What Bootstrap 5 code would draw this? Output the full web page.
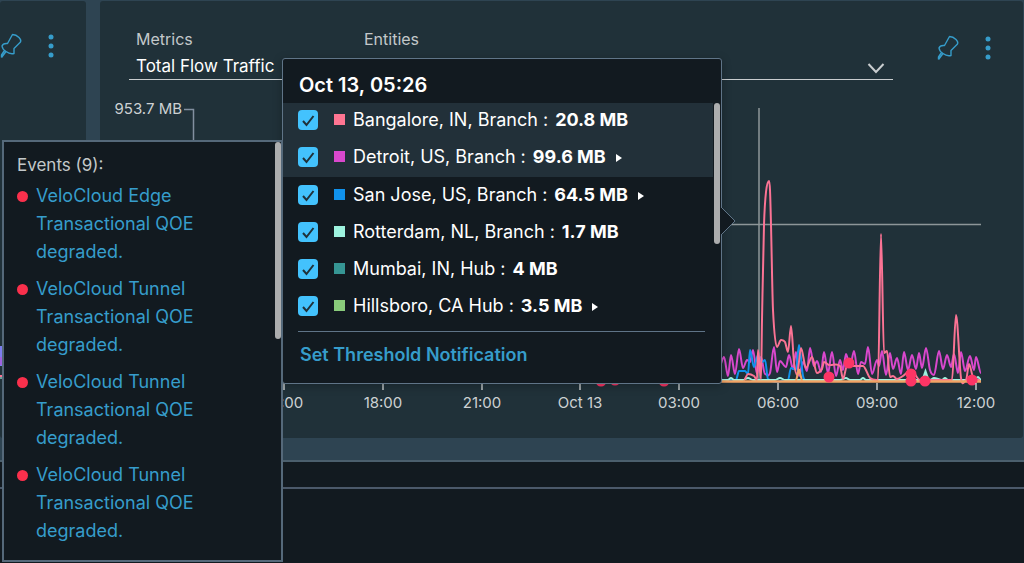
<!DOCTYPE html>
<html lang="en" data-bs-theme="dark">
<head>
<meta charset="utf-8">
<meta name="viewport" content="width=device-width, initial-scale=1">
<title>Flow Traffic</title>
<link href="https://cdn.jsdelivr.net/npm/bootstrap@5.3.0/dist/css/bootstrap.min.css" rel="stylesheet">
<style>
  :root { --ink:#121a20; --panel:#203139; --edge:#55697a; --sky:#369dcb; --soft:#c3c8ca; }
  body { background:#2e4452; color:#fff; font-family:Inter, "Liberation Sans", sans-serif; font-size:16px; overflow:hidden; }
  .dash { padding:1px 1px 22px 0; gap:14px; }
  .panel { background:var(--panel); border-radius:3px; }
  .panel-side { width:86px; }
  .side-tools { padding:32px 32px 0 0; }
  .tool { color:var(--sky); line-height:0; background:none; border:0; padding:0; }
  .tools { gap:25px; }
  .panel-head { padding:26px 32px 0 29px; height:87px; }
  .field label { color:var(--soft); font-size:16px; line-height:24px; padding-left:7px; display:block; }
  .field select { appearance:none; width:100%; height:29px; background:none; border:0; border-bottom:1px solid #c9cdcf; border-radius:0; color:#fff; font-size:17px; padding:3px 7px 0; }
  .field-a { width:218px; }
  .field-b { margin-left:10px; margin-right:43px; }
  .chevron { right:8px; bottom:6px; pointer-events:none; }
  .chart { display:block; width:100%; height:auto; }
  .chart text { fill:#cdd1d3; font-size:15px; }
  .foot { background:var(--ink); border-top:2px solid #4b5f6d; }
  .foot-bar { height:27px; border-bottom:2px solid #4b596a; }

  .floating { background:var(--ink); border:2px solid var(--edge); }
  .events { left:2px; top:140px; width:281px; height:422px; z-index:3; padding:9px 0 0 13px; overflow:hidden; }
  .events h2 { font-size:17px; line-height:28px; font-weight:400; color:var(--soft); margin:0 0 3px; }
  .events li { margin-bottom:9px; gap:8px; }
  .events a { color:var(--sky); font-size:18px; line-height:28px; text-decoration:none; width:190px; }
  .bullet { width:11px; height:11px; margin-top:9px; background:#fa304c; border-radius:50%; flex:none; }
  .thumb { width:6px; background:#acadae; border-radius:3px; }
  .events .thumb { right:0; top:0; height:197px; }

  .readout { left:282px; top:58px; width:440px; border-width:1px; border-color:#5f7487; border-radius:3px; z-index:2; box-shadow:0 2px 10px #0004; }
  .readout h2 { font-size:20px; line-height:26px; font-weight:600; margin:0; padding:13px 16px 5px; }
  .series { height:37px; padding:0 15px 4px; margin-right:8px; font-size:18px; }
  .series.lit { background:#223039; }
  .series.lit + .series:not(.lit) { margin-top:1px; }
  .series .form-check-input { width:20px; height:20px; margin:0 16px 0 0; border:0; border-radius:4px; background-color:#43c2fd; flex:none;
    background-image:url("data:image/svg+xml,%3Csvg xmlns='http://www.w3.org/2000/svg' viewBox='0 0 20 20'%3E%3Cpath d='M5 11l3.5 4L15.500 6' fill='none' stroke='%23203139' stroke-width='2'/%3E%3C/svg%3E"); }
  .swatch { width:11px; height:11px; margin-right:8px; flex:none; }
  .value { font-weight:700; margin-left:7px; }
  .caret { border:4px solid transparent; border-left:6px solid #fff; border-right:0; margin-left:10px; margin-top:3px; }
  .readout .thumb { right:1px; top:44px; height:141px; }
  .readout-foot { margin:5px 16px 0 15px; border-top:1px solid #5f7487; padding:10px 2px 15px; }
  .readout-foot a { color:var(--sky); font-size:18px; font-weight:600; line-height:26px; text-decoration:none; }
  .pointer { left:100%; top:147px; }
</style>
</head>
<body>
<div class="position-relative d-flex flex-column vh-100">
  <main class="dash d-flex align-items-stretch">
    <section class="panel panel-side d-flex flex-column flex-shrink-0">
      <div class="side-tools tools d-flex justify-content-end">
        <button class="tool" type="button" aria-label="Pin"><svg width="24" height="26"><use href="#pin"/></svg></button>
        <button class="tool" type="button" aria-label="More"><svg width="6" height="26"><use href="#dots"/></svg></button>
      </div>
      <svg class="mt-auto mb-5" width="20" height="44" aria-hidden="true"><path d="M1 0V20" stroke="#7c7df0" stroke-width="3"/><path d="M1 11V19" stroke="#c248cf"/><path d="M0 30H20" stroke="#fb7394" stroke-width="2"/><path d="M0 32H20" stroke="#6ca29b" stroke-width="2"/></svg>
    </section>

    <section class="panel flex-grow-1">
      <div class="panel-head d-flex align-items-start">
        <div class="field field-a">
          <label for="metric">Metrics</label>
          <select id="metric"><option>Total Flow Traffic</option></select>
        </div>
        <div class="field field-b flex-grow-1 position-relative">
          <label for="entity">Entities</label>
          <select id="entity"><option></option></select>
          <svg class="chevron position-absolute" width="18" height="12"><path d="M1.500 2L9 10L16.500 2" fill="none" stroke="#c9cdcf" stroke-width="2"/></svg>
        </div>
        <div class="tools d-flex pt-1 mt-1">
          <button class="tool" type="button" aria-label="Pin"><svg width="24" height="26"><use href="#pin"/></svg></button>
          <button class="tool" type="button" aria-label="More"><svg width="6" height="26"><use href="#dots"/></svg></button>
        </div>
      </div>

      <svg class="chart" viewBox="100 88 923 350" role="img" aria-label="Total flow traffic over time">
        <text x="182" y="114" text-anchor="end">953.7 MB</text>
        <path d="M184 109.500H193.500V381" fill="none" stroke="#8290a0" stroke-width="1.500"/>
        <path d="M200 224.500H981M759 108V381" stroke="#8d9699" stroke-width="1.500"/>
        <g id="lines" fill="none" stroke-width="2" stroke-linejoin="round"></g>
        <path d="M194 381.500H981" stroke="#f2a365" stroke-width="2.500"/>
        <path d="M796 381L799 369L802 381" fill="none" stroke="#f2a365" stroke-width="2"/>
        <path d="M921.500 380L925.500 368L929.500 380Z" fill="#9df3df"/>
        <g id="dots-layer" fill="#fc3565"></g>
        <g id="axis" text-anchor="middle" stroke-width="1.500"></g>
      </svg>
    </section>
  </main>

  <footer class="foot flex-grow-1"><div class="foot-bar"></div></footer>

  <aside class="events floating position-absolute">
    <h2>Events (9):</h2>
    <ul class="list-unstyled m-0">
      <li class="d-flex"><span class="bullet"></span><a href="#">VeloCloud Edge Transactional QOE degraded.</a></li>
      <li class="d-flex"><span class="bullet"></span><a href="#">VeloCloud Tunnel Transactional QOE degraded.</a></li>
      <li class="d-flex"><span class="bullet"></span><a href="#">VeloCloud Tunnel Transactional QOE degraded.</a></li>
      <li class="d-flex"><span class="bullet"></span><a href="#">VeloCloud Tunnel Transactional QOE degraded.</a></li>
      <li class="d-flex"><span class="bullet"></span><a href="#">VeloCloud Tunnel</a></li>
    </ul>
    <span class="thumb position-absolute"></span>
  </aside>

  <div class="readout floating position-absolute">
    <h2>Oct 13, 05:26</h2>
    <div class="series lit d-flex align-items-center"><input class="form-check-input" type="checkbox" id="s1" checked><span class="swatch" style="background:#ff7592"></span><label for="s1">Bangalore, IN, Branch :</label><span class="value">20.8 MB</span></div>
    <div class="series lit d-flex align-items-center"><input class="form-check-input" type="checkbox" id="s2" checked><span class="swatch" style="background:#d948cd"></span><label for="s2">Detroit, US, Branch :</label><span class="value">99.6 MB</span><span class="caret"></span></div>
    <div class="series d-flex align-items-center"><input class="form-check-input" type="checkbox" id="s3" checked><span class="swatch" style="background:#1092ec"></span><label for="s3">San Jose, US, Branch :</label><span class="value">64.5 MB</span><span class="caret"></span></div>
    <div class="series d-flex align-items-center"><input class="form-check-input" type="checkbox" id="s4" checked><span class="swatch" style="background:#9df3df"></span><label for="s4">Rotterdam, NL, Branch :</label><span class="value">1.7 MB</span></div>
    <div class="series d-flex align-items-center"><input class="form-check-input" type="checkbox" id="s5" checked><span class="swatch" style="background:#369694"></span><label for="s5">Mumbai, IN, Hub :</label><span class="value">4 MB</span></div>
    <div class="series d-flex align-items-center"><input class="form-check-input" type="checkbox" id="s6" checked><span class="swatch" style="background:#89cb7b"></span><label for="s6">Hillsboro, CA Hub :</label><span class="value">3.5 MB</span><span class="caret"></span></div>
    <div class="readout-foot"><a href="#">Set Threshold Notification</a></div>
    <span class="thumb position-absolute"></span>
    <svg class="pointer position-absolute" width="16" height="30"><path d="M0 1L14 15L0 29" fill="#121a20" stroke="#5f7487"/></svg>
  </div>
</div>

<svg class="d-none" aria-hidden="true">
  <symbol id="pin" viewBox="0 0 24 26">
    <path d="M2.500 24.500L7 18.500Q11 21.500 15 20.500L15 15.500L21.500 9Q22.500 7 20 4.500Q17 1.500 13.500 1.500L8.500 10.500Q4 10 3 13Q3.500 16.500 7 18.500M2.500 24.500L2.500 22L5.500 17.500" fill="none" stroke="currentColor" stroke-width="1.400" stroke-linejoin="round"/>
  </symbol>
  <symbol id="dots" viewBox="0 0 6 26"><g fill="currentColor"><circle cx="3" cy="4" r="2.500"/><circle cx="3" cy="13" r="2.500"/><circle cx="3" cy="22" r="2.500"/></g></symbol>
</svg>

<script src="https://cdn.jsdelivr.net/npm/bootstrap@5.3.0/dist/js/bootstrap.bundle.min.js"></script>
<script>
  // Each series is a list of x,y points joined by curves that flatten at every point.
  const series = [
    ['#d948cd', '716,370 720,366 724,357 728,376 731,355 735,374 739,349 743,368 747,360 750,362 753,350 757,374 761,357 765,374 770,373 774,347 777,372 780,361 786,367 789,355 793,369 796,352 799,376 803,362 807,371 810,348 814,366 817,361 821,372 824,352 828,373 832,352 836,376 840,360 843,370 846,354 850,367 854,351 858,374 861,362 865,364 868,347 872,374 877,360 879,366 882,351 886,375 890,353 893,369 897,358 901,374 904,352 908,370 912,355 916,369 919,353 922,368 926,348 930,370 934,375 939,351 943,369 947,355 951,367 954,354 958,373 961,352 965,371 970,356 974,370 976,357 981,373'],
    ['#1092ec', '718,368 722,380 736,380 739,371 745,371 748,374 750,350 754,367 758,355 762,362 765,360 768,379 788,380 791,368 796,370 799,345 803,376 806,380'],
    ['#9df3df', '716,380 728,380 731,378 734,380 743,380 748,378 753,380 775,380 780,378 785,380 840,380 846,378 850,380 860,380 863,378 866,380 930,380 934,378 942,380 945,378 948,380 974,380 978,377 981,380'],
    ['#fb7394', '744,380 748,374 754,376 757,380 758,350 761,379 762,320 764,225 766,192 769,181 770,190 771,225 773,310 777,347 781,340 785,342 788,352 791,326 794,362 797,375 801,348 806,368 812,357 817,373 822,369 824,362 829,365 840,366 843,379 847,366 863,366 870,378 878,380 881,234 884,353 887,351 890,377 893,376 897,379 903,376 911,370 920,380 952,380 956,315 961,378 966,380 969,364 973,377 980,380']
  ];
  const NS = 'http://www.w3.org/2000/svg';
  const add = (parent, tag, attrs, text) => {
    const el = document.createElementNS(NS, tag);
    for (const k in attrs) el.setAttribute(k, attrs[k]);
    if (text) el.textContent = text;
    document.getElementById(parent).appendChild(el);
  };
  for (const [stroke, data] of series) {
    const p = data.split(' ').map(s => s.split(',').map(Number));
    // Slope is zero at peaks and valleys, and the neighbours' average on a steady rise or fall.
    const m = p.map((q, i) => {
      const a = p[i - 1], b = p[i + 1];
      if (!a || !b || (q[1] - a[1]) * (b[1] - q[1]) <= 0) return 0;
      return (b[1] - a[1]) / (b[0] - a[0]);
    });
    let d = 'M' + p[0];
    for (let i = 1; i < p.length; i++) {
      const w = (p[i][0] - p[i - 1][0]) * 0.33;
      d += `C${p[i - 1][0] + w},${p[i - 1][1] + w * m[i - 1]} ${p[i][0] - w},${p[i][1] - w * m[i]} ${p[i]}`;
    }
    add('lines', 'path', { d, stroke });
  }
  for (const [cx, cy] of [[601, 381], [615, 380], [664, 381], [829, 377], [849, 363], [911, 374], [911, 381], [925, 381], [972, 380]])
    add('dots-layer', 'circle', { cx, cy, r: 5.5 });
  ['15:00', '18:00', '21:00', 'Oct 13', '03:00', '06:00', '09:00', '12:00'].forEach((t, i) => {
    const x = 284 + Math.round(i * 98.8);
    add('axis', 'path', { d: `M${x} 383V390`, stroke: '#c3c8ca' });
    add('axis', 'text', { x, y: 408 }, t);
  });
</script>
</body>
</html>
